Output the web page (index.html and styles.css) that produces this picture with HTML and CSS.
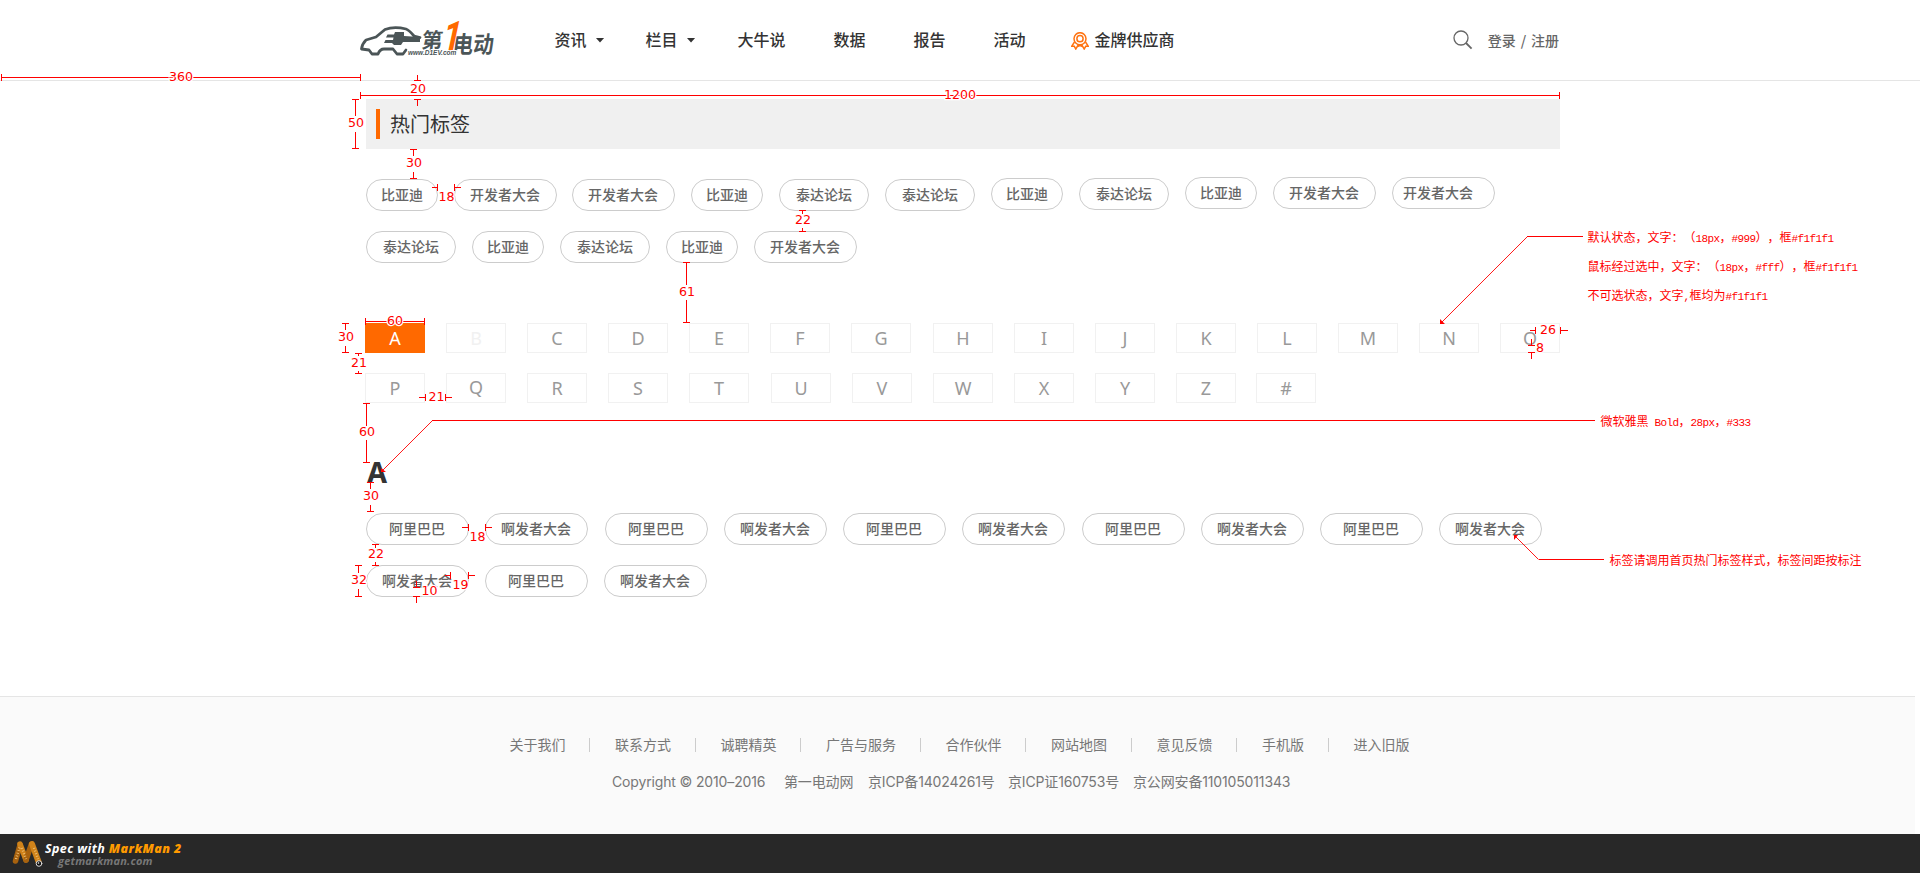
FILE: index.html
```html
<!DOCTYPE html>
<html lang="zh-CN">
<head>
<meta charset="utf-8">
<title>热门标签 - 第一电动网</title>
<link rel="stylesheet" href="styles.css">
</head>
<body>
<div class="page">
  <header class="header">
    <svg class="logo" width="136" height="40" viewBox="0 0 136 40">
      <path fill="none" stroke="#4b5557" stroke-width="2.800" stroke-linejoin="round" stroke-linecap="round" d="M60 18.500L54 17Q49 11 46 10Q34 7 25 10.500L16 18L6 21Q2 25 1.500 30L9 31L12 35H18Q20 30 24 30H33L37 35H43L46 31"/>
      <path fill="#4b5557" d="M35 13H44V17L60 18V23H43L41 26H34L32 24H24L25.500 21H33L33.500 18.500H26L27.500 15.500H34Z"/>
      <g class="logo-type">
        <text font-size="21" transform="translate(61 28.500) skewX(-6)">第</text>
        <text font-size="22" transform="translate(92 34) skewX(-6) scale(.93 1.080)">电动</text>
        <text class="logo-one" font-size="42" transform="translate(80.500 32) skewX(-12) scale(.750 1)">1</text>
        <text class="logo-url" x="48" y="35.500">www.D1EV.com</text>
      </g>
    </svg>
    <nav class="nav">
      <a class="nav-item drop">资讯<i class="caret"></i></a>
      <a class="nav-item drop wide">栏目<i class="caret"></i></a>
      <a class="nav-item">大牛说</a>
      <a class="nav-item">数据</a>
      <a class="nav-item">报告</a>
      <a class="nav-item last">活动</a>
      <a class="nav-item medal">
        <svg width="18" height="18" viewBox="0 0 18 18" fill="none" stroke="#ff7311" stroke-width="1.500">
          <circle cx="9" cy="6.700" r="6"/><circle cx="9" cy="6.700" r="3.100"/>
          <path d="M3.500 10L.8 14.200L3.300 14.300L4.800 17L7.400 12.700M14.500 10L17.200 14.200L14.700 14.300L13.200 17L10.600 12.700M6.500 14.500L9 13.500L11.500 14.500"/>
        </svg>金牌供应商</a>
    </nav>
    <div class="user">
      <svg width="20" height="20" viewBox="0 0 20 20" fill="none" stroke="#666" stroke-width="1.300">
        <circle cx="8" cy="8" r="7"/><path d="M13 13L18.600 18.600" stroke-width="1.800"/>
      </svg>
      <span class="login">登录 / 注册</span>
    </div>
  </header>

  <main class="main">
    <h1 class="title"><i class="bar"></i>热门标签</h1>
    <div class="tags hot">
      <span class="tag t3">比亚迪</span><span class="tag t5 tight">开发者大会</span><span class="tag t5">开发者大会</span><span class="tag t3">比亚迪</span><span class="tag t4">泰达论坛</span><span class="tag t4">泰达论坛</span><span class="tag t3 up1">比亚迪</span><span class="tag t4 up1">泰达论坛</span><span class="tag t3 up2">比亚迪</span><span class="tag t5 up2">开发者大会</span><span class="tag t5 up2 shift">开发者大会</span>
    </div>
    <div class="tags second">
      <span class="tag t4">泰达论坛</span><span class="tag t3">比亚迪</span><span class="tag t4">泰达论坛</span><span class="tag t3">比亚迪</span><span class="tag t5">开发者大会</span>
    </div>
    <div class="letters">
      <a class="on">A</a><a class="off">B</a><a>C</a><a>D</a><a>E</a><a>F</a><a class="gap">G</a><a>H</a><a>I</a><a>J</a><a>K</a><a>L</a><a>M</a><a>N</a><a>O</a>
    </div>
    <div class="letters">
      <a>P</a><a class="q">Q</a><a>R</a><a>S</a><a class="gap">T</a><a>U</a><a>V</a><a>W</a><a>X</a><a>Y</a><a class="less">Z</a><a>#</a>
    </div>
    <h2 class="initial">A</h2>
    <div class="tags list">
      <span class="tag t5">阿里巴巴</span><span class="tag t5 loose">啊发者大会</span><span class="tag t5">阿里巴巴</span><span class="tag t5">啊发者大会</span><span class="tag t5">阿里巴巴</span><span class="tag t5 loose">啊发者大会</span><span class="tag t5">阿里巴巴</span><span class="tag t5">啊发者大会</span><span class="tag t5">阿里巴巴</span><span class="tag t5">啊发者大会</span>
    </div>
    <div class="tags second">
      <span class="tag t5">啊发者大会</span><span class="tag t5">阿里巴巴</span><span class="tag t5">啊发者大会</span>
    </div>
  </main>

  <footer class="footer">
    <div class="links">
      <a>关于我们</a><a>联系方式</a><a>诚聘精英</a><a>广告与服务</a><a>合作伙伴</a><a>网站地图</a><a>意见反馈</a><a>手机版</a><a>进入旧版</a>
    </div>
    <div class="legal">
      <span class="copy">Copyright © 2010–2016</span><span class="site">第一电动网</span><span class="icp">京ICP备14024261号</span><span class="cert">京ICP证160753号</span><span class="police">京公网安备110105011343</span>
    </div>
  </footer>

  <div class="markman">
    <svg width="32" height="30" viewBox="0 0 32 30" fill="none" stroke-linecap="round">
      <path d="M3.500 22L8 6" stroke="#a8620e" stroke-width="5.500"/>
      <path d="M8 5L14 21" stroke="#d0831a" stroke-width="5.500"/>
      <path d="M14 21L19.500 5" stroke="#a8620e" stroke-width="5.500"/>
      <path d="M20 5L27 24" stroke="#d0831a" stroke-width="6"/>
      <path d="M4 20L8 7M10 9L14 20M22 9L26 20" stroke="#f0c27c" stroke-width="2.500" stroke-dasharray=".8 2" stroke-linecap="butt"/>
      <circle cx="27" cy="24.500" r="2.800" fill="#111" stroke="#ddd" stroke-width="1"/>
      <circle cx="26.500" cy="24" r=".8" fill="#fff"/>
    </svg>
    <div class="spec">
      <div class="spec-name">Spec with <b>MarkMan 2</b></div>
      <div class="spec-url">getmarkman.com</div>
    </div>
  </div>

  <svg class="marks" width="1920" height="873" viewBox="0 0 1920 873">
    <path class="dim" d="
      M1.500 74V81M360.500 74V81M1 77.500H361
      M414 80.500H421M417.500 75V80M414 99.500H421M417.500 99V106
      M360.500 92V99M1559.500 92V99M360 95.500H1560
      M352 99.500H359M352 148.500H359M355.500 99V116M355.500 132V149
      M410 149.500H417M410 178.500H417M413.500 149V156M413.500 172V179
      M437.500 184V191M454.500 184V191M432 187.500H437M455 187.500H461
      M799 210.500H806M799 231.500H806M802.500 210V214M802.500 228V232
      M683 262.500H690M683 322.500H690M686.500 262V285M686.500 300V323
      M365.500 318V325M424.500 318V325M365 321.500H425
      M342 323.500H349M342 352.500H349M345.500 323V330M345.500 346V353
      M355 353.500H362M355 373.500H362M358.500 353V356M358.500 371V374
      M425.500 394V401M445.500 394V401M419 397.500H425M446 397.500H452
      M363 403.500H370M363 462.500H370M366.500 403V426M366.500 440V463
      M367 482.500H374M367 511.500H374M370.500 482V489M370.500 505V512
      M468.500 524V531M485.500 524V531M462 527.500H468M486 527.500H492
      M372 544.500H379M372 565.500H379M375.500 544V548M375.500 562V566
      M355 565.500H362M355 596.500H362M358.500 565V573M358.500 589V597
      M450.500 572V579M468.500 572V579M445 575.500H450M469 575.500H475
      M413 587.500H420M413 596.500H420M416.500 581V587M416.500 596V603
      M1535.500 327V334M1560.500 327V334M1530 330.500H1535M1561 330.500H1568
      M1528 345.500H1535M1528 352.500H1535M1531.500 339V345M1531.500 352V359
      M1527 236.500H1583M432 420.500H1595M1539 559.500H1604"/>
    <path class="leader" d="M1527.500 236.500L1441.500 322.500M432.500 420.500L381.500 471.500M1538.500 559.500L1515 536"/>
    <path class="head" d="M1440 319V324H1445ZM381 468V472H386ZM1514 535V540L1518 535Z"/>
    <g class="num">
      <text x="181" y="81">360</text><text x="418" y="93">20</text><text x="960" y="99">1200</text>
      <text x="356" y="127">50</text><text x="414" y="167">30</text><text x="446.500" y="201">18</text>
      <text x="803" y="224">22</text><text x="687" y="296">61</text><text x="395" y="325">60</text>
      <text x="346" y="341">30</text><text x="359" y="367">21</text><text x="436.500" y="401">21</text>
      <text x="367" y="436">60</text><text x="371" y="500">30</text><text x="477.500" y="541">18</text>
      <text x="376" y="558">22</text><text x="359" y="584">32</text><text x="460.500" y="589">19</text>
      <text x="429.500" y="595">10</text><text x="1548" y="334">26</text><text x="1540" y="352">8</text>
    </g>
    <g class="note">
      <text x="1587.500" y="242">默认状态，文字：（<tspan>18px</tspan>，<tspan>#999</tspan>），框<tspan>#f1f1f1</tspan></text>
      <text x="1587.500" y="271">鼠标经过选中，文字：（<tspan>18px</tspan>，<tspan>#fff</tspan>），框<tspan>#f1f1f1</tspan></text>
      <text x="1587.500" y="300">不可选状态，文字<tspan>,</tspan>框均为<tspan>#f1f1f1</tspan></text>
      <text x="1600.500" y="426">微软雅黑<tspan xml:space="preserve"> Bold</tspan>，<tspan>28px</tspan>，<tspan>#333</tspan></text>
      <text x="1609.500" y="565">标签请调用首页热门标签样式，标签间距按标注</text>
    </g>
  </svg>
</div>
</body>
</html>
```

FILE: styles.css
```css
* { box-sizing: border-box; }
body {
  margin: 0;
  background: #fff;
  color: #666;
  font-family: "Noto Sans", "Noto Sans CJK SC", sans-serif;
  font-size: 14px;
}
.page {
  position: relative;
  width: 1920px;
  height: 873px;
  overflow: hidden;
  display: flex;
  flex-direction: column;
}

/* header */
.header {
  flex: none;
  height: 81px;
  padding: 0 361px 0 360px;
  border-bottom: 1px solid #e5e5e5;
  display: flex;
  align-items: center;
}
.logo { display: block; margin-top: -2px; overflow: visible; }
.logo-type { font-family: "Noto Sans CJK SC", sans-serif; font-weight: 700; fill: #4b5557; }
.logo-one { font-family: "Roboto", sans-serif; font-weight: 700; fill: #ff6900; stroke: #fff; stroke-width: 1.5px; paint-order: stroke; }
.logo-url { font: italic 700 6.5px "Liberation Sans", sans-serif; stroke: #fff; stroke-width: 2px; paint-order: stroke; }
.nav {
  display: flex;
  align-items: center;
  margin: -2px 0 0 58.5px;
  height: 24px;
  color: #333;
  font: 500 16px/24px "Noto Sans CJK SC", sans-serif;
}
.nav-item { display: flex; align-items: center; margin-right: 48px; }
.nav-item.drop { margin-right: 41px; }
.nav-item.wide { margin-right: 42px; }
.nav-item.last { margin-right: 45px; }
.nav-item.medal { gap: 6px; margin-right: 0; }
.medal svg { margin-top: 3px; }
.caret {
  width: 9px;
  height: 5px;
  margin: 2px 0 0 9px;
  background: #333;
  clip-path: polygon(0 0, 100% 0, 50% 100%);
}
.user {
  margin-left: auto;
  display: flex;
  align-items: center;
  gap: 15px;
  font: 500 14px/20px "Noto Sans CJK SC", sans-serif;
}
.login { word-spacing: 1.7px; }

/* content */
.main { flex: none; height: 615px; padding: 18px 360px 0 365px; }
.title {
  margin: 0 0 0 1px;
  height: 50px;
  padding: 0 10px;
  display: flex;
  align-items: center;
  gap: 10px;
  background: #f0f0f0;
  color: #333;
  font: 400 20px/50px "Noto Sans CJK SC", sans-serif;
}
.bar { width: 4px; height: 30px; background: #ff6900; }
.tags { display: flex; padding-left: 1px; }
.hot { margin-top: 30px; }
.second { margin-top: 20px; }
.tag {
  height: 32px;
  margin-right: 16px;
  border: 1px solid #ccc;
  border-radius: 16px;
  text-align: center;
  font: 500 14px/28px "Noto Sans CJK SC", sans-serif;
}
.t3 { width: 72px; }
.t4 { width: 90px; }
.t5 { width: 103px; padding-right: 1px; }
.tight { margin-right: 15px; }
.loose { margin-right: 17px; }
.up1 { margin-top: -1px; }
.up2 { margin-top: -2px; }
.shift { padding-right: 11px; }

.letters { display: flex; gap: 21px; margin-top: 20px; }
.second + .letters { margin-top: 60px; }
.letters a {
  width: 60px;
  height: 30px;
  border: 1px solid #f1f1f1;
  color: #999;
  text-align: center;
  font: 400 18px/29px "Noto Sans", sans-serif;
}
.letters .on { background: #ff6900; border-color: #ff6900; color: #fff; }
.letters .off { color: #f1f1f1; }
.letters .gap { margin-right: 1px; }
.letters .less { margin-right: -1px; }
.letters .q { line-height: 27px; }
.initial {
  margin: 50px 0 0 2px;
  height: 40px;
  color: #333;
  font: 700 29px/38px "Noto Sans", sans-serif;
}
.list { margin-top: 20px; }

/* footer */
.footer {
  flex: none;
  width: 1915px;
  height: 138px;
  border-top: 1px solid #e5e5e5;
  background: #fafafa;
  color: #777;
}
.links {
  display: flex;
  margin: 37px 0 0 509.5px;
  font: 400 14px/20px "Noto Sans CJK SC", sans-serif;
}
.links a { display: flex; align-items: center; }
.links a + a::before {
  content: "";
  width: 1px;
  height: 14px;
  margin: 1px 25px 0 23.5px;
  background: #ccc;
}
.legal {
  display: flex;
  margin: 18px 0 0 612px;
  font: 400 14px/20px "Inter", "Noto Sans CJK SC", sans-serif;
  letter-spacing: -.15px;
  white-space: nowrap;
}
.copy { width: 172px; }
.site { width: 84px; }
.icp { width: 140px; }
.cert { width: 125px; }

/* tool bar */
.markman {
  flex: none;
  height: 39px;
  padding-left: 12px;
  display: flex;
  align-items: center;
  background: #282828;
}
.spec { margin: 1px 0 0 1px; font: italic 700 12.5px/13px "Open Sans", sans-serif; letter-spacing: .4px; color: #fff; }
.spec b { color: #ff9a00; }
.spec-url { margin-left: 13px; font-size: 11px; line-height: 12px; letter-spacing: .2px; color: #777; }

/* measurement overlay */
.marks { position: absolute; left: 0; top: 0; }
.dim { fill: none; stroke: #f00; shape-rendering: crispEdges; }
.leader { fill: none; stroke: #f00; stroke-width: .9; }
.head { fill: #f00; }
.num {
  font: 12.6px "DejaVu Sans", sans-serif;
  text-anchor: middle;
  fill: #f00;
  stroke: #fff;
  stroke-width: 2.5px;
  paint-order: stroke;
}
.note { font: 12px "Noto Sans CJK SC", sans-serif; text-spacing-trim: space-all; fill: #f00; }
.note tspan { font: 11px "Liberation Mono", monospace; letter-spacing: -.6px; }
```
